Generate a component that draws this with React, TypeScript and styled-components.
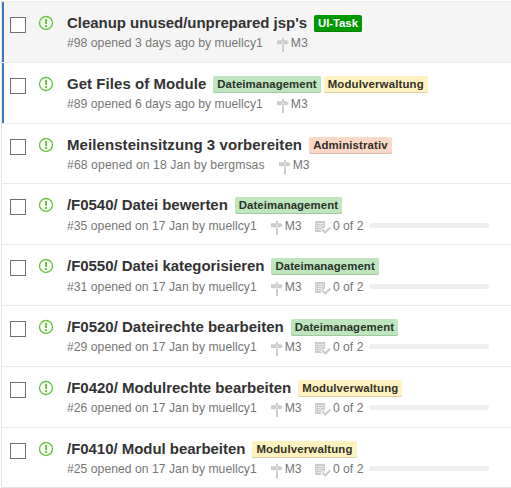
import React from "react";
import styled, { createGlobalStyle } from "styled-components";

const GlobalStyle = createGlobalStyle`
  * { box-sizing: border-box; }
  body { margin: 0; background: #fff; overflow: hidden; font-family: "Liberation Sans", Arial, sans-serif; }
`;

const List = styled.ul`
  list-style: none;
  margin: 1px 0 0 1px;
  padding: 0;
  height: 487px;
  border: solid #e5e5e5;
  border-width: 0 0 1px 1px;
`;

const Row = styled.li<{ $height: number; $unread?: boolean; $focused?: boolean }>`
  display: flex;
  align-items: flex-start;
  height: ${(p) => p.$height}px;
  border-top: 1px solid #eaeaea;
  padding-left: 8px;
  background: ${(p) =>
    p.$unread
      ? `linear-gradient(#4078c0, #4078c0) 0 0 / 2px 100% no-repeat, ${p.$focused ? "#f5f5f5" : "#fff"}`
      : "#fff"};
`;

const Checkbox = styled.span`
  flex: none;
  width: 16px;
  height: 16px;
  margin-top: 15px;
  border: 1px solid #707070;
  background: #fff;
`;

const OpenIcon = styled.svg`
  flex: none;
  width: 14px;
  height: 14px;
  margin: 14px 0 0 13px;
  overflow: visible;
`;

const Body = styled.div`
  margin: 13px 0 0 14px;
  white-space: nowrap;
`;

const Heading = styled.div`
  display: flex;
  align-items: flex-start;
  height: 20px;
`;

const Title = styled.a<{ $spacing: number }>`
  font-size: 15px;
  font-weight: bold;
  line-height: 15px;
  letter-spacing: ${(p) => p.$spacing}px;
  color: #333;
  margin-right: 7px;
`;

const tones = {
  green: ["#bfe5bf", "#2a332a", "#a3c6a3", "0.08px"],
  yellow: ["#fef2c0", "#333026", "#dccfa4", "0.17px"],
  salmon: ["#fad8c7", "#332c28", "#dbb9aa", "0.14px"],
  solid: ["#009800", "#fff", "#008200", "-0.06px"],
};
type Tone = keyof typeof tones;

const Label = styled.span<{ $tone: Tone }>`
  height: 17px;
  padding: 0 4px;
  margin-right: 3px;
  border-radius: 2px;
  font-size: 11.4px;
  font-weight: bold;
  line-height: 17px;
  letter-spacing: ${(p) => tones[p.$tone][3]};
  background: ${(p) => tones[p.$tone][0]};
  color: ${(p) => tones[p.$tone][1]};
  box-shadow: inset 0 -1px 0 ${(p) => tones[p.$tone][2]};
`;

const Meta = styled.div<{ $drop: number }>`
  display: flex;
  align-items: center;
  height: 16px;
  margin-top: ${(p) => p.$drop}px;
  font-size: 12.2px;
  line-height: 16px;
  color: #767676;
`;

const Opened = styled.span<{ $spacing: number }>`
  letter-spacing: ${(p) => p.$spacing}px;
`;

const MilestoneIcon = styled.svg`
  width: 12px;
  height: 14px;
  margin: 4px 2px 0 14px;
`;

const TaskIcon = styled.svg`
  width: 16px;
  height: 13px;
  margin: 2px 2px 0 13.3px;
`;

const Progress = styled.span`
  width: 120px;
  height: 5px;
  margin: 0 0 1px 5.2px;
  border-radius: 3px;
  background: #eee;
`;

interface Issue {
  title: string;
  opened: string;
  labels: [string, Tone][];
  height?: number;
  unread?: boolean;
  focused?: boolean;
  tasks?: boolean;
  drop?: number;
  titleSpacing?: number;
  openedSpacing?: number;
}

const issues: Issue[] = [
  { title: "Cleanup unused/unprepared jsp's", opened: "#98 opened 3 days ago by muellcy1", labels: [["UI-Task", "solid"]], unread: true, focused: true, titleSpacing: -0.035 },
  { title: "Get Files of Module", opened: "#89 opened 6 days ago by muellcy1", labels: [["Dateimanagement", "green"], ["Modulverwaltung", "yellow"]], unread: true, titleSpacing: 0.05 },
  { title: "Meilensteinsitzung 3 vorbereiten", opened: "#68 opened on 18 Jan by bergmsas", labels: [["Administrativ", "salmon"]], height: 60, titleSpacing: 0.08, openedSpacing: 0.1 },
  { title: "/F0540/ Datei bewerten", opened: "#35 opened on 17 Jan by muellcy1", labels: [["Dateimanagement", "green"]], tasks: true, drop: 1, titleSpacing: -0.045 },
  { title: "/F0550/ Datei kategorisieren", opened: "#31 opened on 17 Jan by muellcy1", labels: [["Dateimanagement", "green"]], tasks: true, drop: 1, titleSpacing: -0.035 },
  { title: "/F0520/ Dateirechte bearbeiten", opened: "#29 opened on 17 Jan by muellcy1", labels: [["Dateimanagement", "green"]], tasks: true },
  { title: "/F0420/ Modulrechte bearbeiten", opened: "#26 opened on 17 Jan by muellcy1", labels: [["Modulverwaltung", "yellow"]], tasks: true },
  { title: "/F0410/ Modul bearbeiten", opened: "#25 opened on 17 Jan by muellcy1", labels: [["Modulverwaltung", "yellow"]], tasks: true, height: 60, titleSpacing: -0.035 },
];

export default function App() {
  return (
    <>
      <GlobalStyle />
      <List>
        {issues.map((issue) => (
          <Row key={issue.title} $height={issue.height ?? 61} $unread={issue.unread} $focused={issue.focused}>
            <Checkbox role="checkbox" aria-checked="false" />
            <OpenIcon viewBox="0 0 14 14" fill="none" stroke="#6cc644">
              <circle cx="7" cy="7" r="6.5" strokeWidth="1.4" />
              <path d="M7 3v5M7 9v2" strokeWidth="2" />
            </OpenIcon>
            <Body>
              <Heading>
                <Title $spacing={issue.titleSpacing ?? 0}>{issue.title}</Title>
                {issue.labels.map(([text, tone]) => (
                  <Label key={text} $tone={tone}>{text}</Label>
                ))}
              </Heading>
              <Meta $drop={issue.drop ?? 0}>
                <Opened $spacing={issue.openedSpacing ?? 0.02}>{issue.opened}</Opened>
                <MilestoneIcon viewBox="0 0 12 14" fill="#ccc">
                  <path fillRule="evenodd" d="M5 0h2v2.2h3l1.7 2-1.7 2H0V2.2h5zM5.4 3.6v1.2h1.2V3.6z" />
                  <path d="M5 7h2v7H5z" />
                </MilestoneIcon>
                <span>M3</span>
                {issue.tasks && (
                  <>
                    <TaskIcon viewBox="0 0 16 13" fill="#ccc">
                      <path d="M0 0h10v6.2L8.4 7.8 7.5 7 5.3 9.2 7 11H0z" />
                      <path stroke="#fff" strokeWidth=".6" d="M1 2.5h1M3 2.5h6M1 4.5h1M3 4.5h6M1 6.5h1M3 6.5h4M1 8.5h1M3 8.5h2" />
                      <path d="M6.6 9.3L8.1 7.8l2.1 2.1 4.2-4.2L16 7.2 10.2 13z" />
                    </TaskIcon>
                    <span>0 of 2</span>
                    <Progress />
                  </>
                )}
              </Meta>
            </Body>
          </Row>
        ))}
      </List>
    </>
  );
}
